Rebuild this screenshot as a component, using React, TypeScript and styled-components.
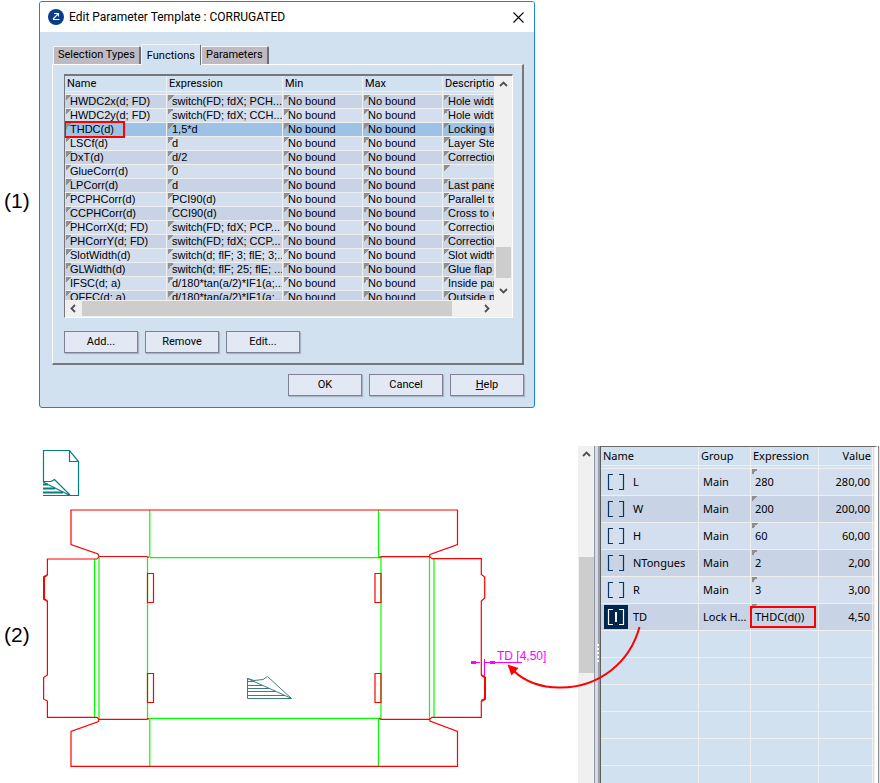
import React from "react";
import styled, { createGlobalStyle, css } from "styled-components";

const Global = createGlobalStyle`
  * { box-sizing: border-box; }
  body { margin: 0; background: #fff; color: #000; }
  button { font: inherit; color: inherit; }
`;

const uiFont = css`font-family: "Noto Sans", "Open Sans", sans-serif;`;
const dialogFont = css`font-family: Roboto, "Open Sans", sans-serif;`;
const gridFont = css`font-family: "Liberation Sans", Arial, sans-serif;`;

const Page = styled.main`
  display: flex;
  flex-direction: column;
  gap: 38px;
  height: 100vh;
  min-height: 700px;
  padding-top: 1px;
  overflow: hidden;
`;

const StepRow = styled.section`
  display: grid;
  grid-template-columns: 39px minmax(0, 496px);
`;

const StepLabel = styled.span`
  align-self: center;
  padding: 0 0 8px 4px;
  font: 21px/24px "Liberation Sans", Arial, sans-serif;
`;

/* ---------- dialog ---------- */

const Dialog = styled.div`
  ${dialogFont}
  font-size: 12px;
  line-height: 16px;
  border: 1px solid #1883d7;
  border-radius: 3px;
  background: #d2e1f0;
  overflow: hidden;
`;

const TitleBar = styled.header`
  display: flex;
  align-items: center;
  gap: 5px;
  height: 30px;
  padding: 0 8px;
  background: #fff;
`;

const Title = styled.h1`
  flex: 1;
  margin: 0;
  font-size: 12px;
  font-weight: 400;
  line-height: 16px;
`;

const CloseButton = styled.button`
  display: flex;
  padding: 2px;
  border: 0;
  background: none;
`;

const DialogBody = styled.div`
  padding: 12px 10px 11px 12px;
`;

const Tabs = styled.div`
  display: flex;
  align-items: flex-end;
  height: 20px;
  padding-left: 1px;
`;

const Tab = styled.button<{ $active?: boolean }>`
  height: ${(p) => (p.$active ? 21 : 18)}px;
  margin-bottom: ${(p) => (p.$active ? -1 : 0)}px;
  padding: ${(p) => (p.$active ? "2px 5px 0" : "0 4px 2px")};
  border: 1px solid #f4f6fa;
  border-right: ${(p) => (p.$active ? 1 : 2)}px solid #6f6d74;
  border-bottom: 0;
  border-radius: 2px 2px 0 0;
  background: ${(p) => (p.$active ? "#d2e1f0" : "#bfb9c1")};
  font-size: 11px;
  line-height: 16px;
  white-space: nowrap;
`;

const TabPanel = styled.div`
  padding: 9px 9px 10px 11px;
  border: 1px solid #fff;
  border-right: 2px solid #75777b;
  border-bottom: 2px solid #75777b;
`;

const ListBox = styled.div`
  display: grid;
  grid-template-columns: minmax(0, 1fr) 17px;
  grid-template-rows: 224px 17px;
  border: 1px solid #fff;
  border-top: 2px solid #75777b;
  border-left: 1px solid #75777b;
  background: #f0f0f0;
`;

const TableClip = styled.div`
  overflow: hidden;
`;

const FunctionTable = styled.table`
  ${gridFont}
  width: 100%;
  table-layout: fixed;
  border-collapse: separate;
  border-spacing: 0;
  font-size: 11px;
  line-height: 13px;
  th {
    ${dialogFont}
    height: 19px;
    padding: 0 2px 3px;
    border-right: 1px solid #f0f0f0;
    border-bottom: 1px solid #f0f0f0;
    background: linear-gradient(#d2e1f0 15px, #f0f0f0 15px, #f0f0f0 16px, #d2e1f0 16px);
    font-size: 11px;
    font-weight: 400;
    text-align: left;
    white-space: nowrap;
    overflow: hidden;
  }
`;

const Col = styled.col<{ $w?: number }>`
  width: ${(p) => (p.$w ? `${p.$w}px` : "auto")};
`;

const corner = css`
  background-image: linear-gradient(135deg, #8f8f8f 50%, transparent 50%);
  background-repeat: no-repeat;
  background-position: 1px 0;
  background-size: 6px 6px;
`;

const FunctionRow = styled.tr<{ $selected?: boolean }>`
  background: #d3dfef;
  &:nth-child(odd) { background: #c8d3e5; }
  ${(p) => p.$selected && css`&&:nth-child(odd) { background: #9ec2e6; }`}
`;

const FunctionCell = styled.td<{ $clip?: boolean }>`
  ${corner}
  height: 14px;
  padding: 0 0 0 5px;
  border-right: 1px solid #f0f0f0;
  border-bottom: 1px solid #f0f0f0;
  white-space: nowrap;
  overflow: ${(p) => (p.$clip ? "hidden" : "visible")};
`;

const Highlighted = styled.span`
  display: block;
  width: 57px;
  height: 13px;
  margin-left: -4px;
  padding-left: 4px;
  outline: 2px solid #f00;
`;

const VScroll = styled.div`
  display: flex;
  flex-direction: column;
  align-items: center;
  justify-content: space-between;
  padding: 4px 1px 5px 0;
  background: #f0f0f0;
`;

const VThumb = styled.div`
  width: 15px;
  height: 31px;
  margin: auto 0 8px;
  background: #cdcdcd;
`;

const HScroll = styled.div`
  display: flex;
  align-items: center;
  justify-content: space-between;
  grid-column: 1 / -1;
  padding: 1px 21px 1px 4px;
`;

const HThumb = styled.div`
  flex: 1;
  height: 15px;
  margin: 0 30px 0 4px;
  background: #cdcdcd;
`;

const ButtonRow = styled.div<{ $end?: boolean }>`
  display: flex;
  justify-content: ${(p) => (p.$end ? "flex-end" : "flex-start")};
  gap: 7px;
  margin-top: ${(p) => (p.$end ? 9 : 13)}px;
`;

const PushButton = styled.button`
  width: 74px;
  height: 22px;
  padding: 0;
  border: 1px solid #7f8096;
  background: #e2e8f4;
  box-shadow: 1px 1px 1px #a9b4c6;
  font-size: 11px;
  line-height: 18px;
`;

type ChevronProps = { dir: "up" | "down" | "left" | "right" };
const chevrons = {
  up: "M1 6 L4.5 2.5 L8 6",
  down: "M1 3 L4.5 6.5 L8 3",
  left: "M6 1 L2.5 4.5 L6 8",
  right: "M3 1 L6.5 4.5 L3 8",
};
const Chevron = ({ dir }: ChevronProps) => (
  <svg width="9" height="9" viewBox="0 0 9 9" fill="none" stroke="#505050" strokeWidth="1.8">
    <path d={chevrons[dir]} />
  </svg>
);

const functions: [string, string, string][] = [
  ["HWDC2x(d; FD)", "switch(FD; fdX; PCH...", "Hole width"],
  ["HWDC2y(d; FD)", "switch(FD; fdX; CCH...", "Hole width"],
  ["THDC(d)", "1,5*d", "Locking to"],
  ["LSCf(d)", "d", "Layer Step"],
  ["DxT(d)", "d/2", "Correction"],
  ["GlueCorr(d)", "0", ""],
  ["LPCorr(d)", "d", "Last pane"],
  ["PCPHCorr(d)", "PCI90(d)", "Parallel to"],
  ["CCPHCorr(d)", "CCI90(d)", "Cross to c"],
  ["PHCorrX(d; FD)", "switch(FD; fdX; PCP...", "Correction"],
  ["PHCorrY(d; FD)", "switch(FD; fdX; CCP...", "Correction"],
  ["SlotWidth(d)", "switch(d; flF; 3; flE; 3;...", "Slot width"],
  ["GLWidth(d)", "switch(d; flF; 25; flE; ...", "Glue flap w"],
  ["IFSC(d; a)", "d/180*tan(a/2)*IF1(a;...", "Inside pan"],
  ["OFFC(d; a)", "d/180*tan(a/2)*IF1(a;...", "Outside pa"],
];

const ParameterDialog = () => (
  <Dialog role="dialog" aria-label="Edit Parameter Template">
    <TitleBar>
      <svg width="16" height="16" viewBox="0 0 16 16">
        <circle cx="8" cy="8" r="8" fill="#0b3c8c" />
        <path d="M6 4.500H10.500V7.500M10.500 4.500L5 10M5 10.500H11.500" fill="none" stroke="#fff" strokeWidth="1.100" />
      </svg>
      <Title>Edit Parameter Template : CORRUGATED</Title>
      <CloseButton aria-label="Close">
        <svg width="11" height="11" viewBox="0 0 11 11" stroke="#000" strokeWidth="1.1">
          <path d="M0.5 0.5l10 10M10.5 0.5l-10 10" />
        </svg>
      </CloseButton>
    </TitleBar>
    <DialogBody>
      <Tabs role="tablist">
        <Tab role="tab">Selection Types</Tab>
        <Tab role="tab" $active aria-selected>Functions</Tab>
        <Tab role="tab">Parameters</Tab>
      </Tabs>
      <TabPanel role="tabpanel">
        <ListBox>
          <TableClip>
            <FunctionTable>
              <colgroup>
                <Col $w={102} /><Col $w={116} /><Col $w={80} /><Col $w={80} /><Col />
              </colgroup>
              <thead>
                <tr><th>Name</th><th>Expression</th><th>Min</th><th>Max</th><th>Description</th></tr>
              </thead>
              <tbody>
                {functions.map(([name, expression, description]) => {
                  const selected = name === "THDC(d)";
                  return (
                    <FunctionRow key={name} $selected={selected}>
                      <FunctionCell>{selected ? <Highlighted>{name}</Highlighted> : name}</FunctionCell>
                      <FunctionCell $clip>{expression}</FunctionCell>
                      <FunctionCell>No bound</FunctionCell>
                      <FunctionCell>No bound</FunctionCell>
                      <FunctionCell $clip>{description}</FunctionCell>
                    </FunctionRow>
                  );
                })}
              </tbody>
            </FunctionTable>
          </TableClip>
          <VScroll><Chevron dir="up" /><VThumb /><Chevron dir="down" /></VScroll>
          <HScroll><Chevron dir="left" /><HThumb /><Chevron dir="right" /></HScroll>
        </ListBox>
        <ButtonRow>
          <PushButton>Add...</PushButton>
          <PushButton>Remove</PushButton>
          <PushButton>Edit...</PushButton>
        </ButtonRow>
      </TabPanel>
      <ButtonRow $end>
        <PushButton>OK</PushButton>
        <PushButton>Cancel</PushButton>
        <PushButton><u>H</u>elp</PushButton>
      </ButtonRow>
    </DialogBody>
  </Dialog>
);

/* ---------- drawing ---------- */

const Workspace = styled.section`
  position: relative;
  display: grid;
  grid-template-columns: 39px 539px 16px 7px minmax(0, 1fr) 2px;
  flex: 1;
  min-height: 0;
  overflow: hidden;
`;

const WorkspaceLabel = styled(StepLabel)`
  align-self: start;
  margin-top: 177px;
`;

const CallArrow = styled.svg`
  position: absolute;
  left: 500px;
  top: 170px;
  pointer-events: none;
`;

const BoxDrawing = () => (
  <svg width="539" height="337" viewBox="39 446 539 337" fill="none">
    <g stroke="#008080" strokeWidth="1.2">
      <path d="M43.500 482V450.500H69.500L78.500 461.500V495.500H43M69.500 450.500V461.500H78.500" />
      <path d="M43 481.500H51L54.500 479.500L70 495M43 482L69 495" />
      <path d="M43 484.500H48M43 488.500H55M43 492.500H63" strokeWidth="2" />
    </g>
    <g stroke="#00ff00" strokeWidth="1.2">
      <path d="M149.800 510V557.500M149.800 557.700H380.500M378.500 510V557.500M147.500 557V719M94.600 559V717M99 557V719" />
      <path d="M381 557V719M429.500 557V719M434 559V717M149.800 766V718.400H381M378.500 718.400V766" />
    </g>
    <g stroke="#ff0000" strokeWidth="1.200">
      <path d="M149 557.500L147 556.500H99L98 554L71 544.500V510H457.500V544.500L430 554.500L429.500 556.600H381L379 557.500" />
      <path d="M99 556.500L97 559H47.400V575M47.400 601V675L43.600 677.500V699L47.400 701V717.400H97L99 719.400H147L149 718.400" />
      <path d="M99 719L98.500 721.500L71 731.500V766.400H457.500V731.500L430 721L429.500 719.400" />
      <path d="M429.500 556.600L432 558.700H481.300V574.500L484.700 577V598L481.300 601V675M481.300 701V717.400H432L429.500 719.400H381L379 718.400" />
      <path d="M147.500 573.500H153.500V602.500H147.500ZM147.500 673.500H153.500V702.500H147.500ZM375 573.500H381V602.500H375ZM375 673.500H381V702.500H375Z" />
      <path d="M47.400 575L44 577V599L47.400 601M481.300 675L485 677.500V699L481.300 701" strokeWidth="2" />
    </g>
    <path
      d="M247.500 678V698.500H291.500L247.500 678.500L254 680.500L263 679.500L267.500 676.500L291.500 698.500M248 681.500H254M248 685.500H262M248 688.500H269M248 691.500H276M248 695.500H285"
      stroke="#3f7c7c"
    />
    <path d="M484.500 659V676M471 662.500H480M485 662.500H522" stroke="#ff00ff" />
    <path d="M471 661h5v3h-5zM490 661h5v3h-5z" fill="#ff00ff" />
    <text x="497" y="660" fill="#ff00ff" fontFamily="Liberation Sans, Arial, sans-serif" fontSize="12">TD [4,50]</text>
  </svg>
);

const PaneScroll = styled.div`
  display: flex;
  flex-direction: column;
  align-items: center;
  padding-top: 4px;
  background: #f0f0f0;
`;

const PaneThumb = styled.div`
  width: 15px;
  height: 116px;
  margin-top: 98px;
  background: #cdcdcd;
`;

const Splitter = styled.div`
  display: flex;
  flex-direction: column;
  gap: 2px;
  padding: 198px 0 0 2px;
  border-left: 1px solid #8f97a6;
  background: linear-gradient(90deg, #d5dce8 3px, #9a9faa 3px, #9a9faa 5px, #5e5e5e 5px);
`;

const Grip = styled.i`
  width: 2px;
  height: 2px;
  background: #fff;
`;

/* ---------- parameter list ---------- */

const ParamPane = styled.div`
  border-top: 1px solid #696969;
  border-right: 3px solid #fff;
  background: #d2e1f0;
  overflow: hidden;
`;

const ParamTable = styled.table`
  ${uiFont}
  width: 100%;
  table-layout: fixed;
  border-collapse: separate;
  border-spacing: 0;
  font-size: 12px;
  line-height: 16px;
  th {
    height: 22px;
    padding: 0 2px 4px;
    border-right: 1px solid #f0f0f0;
    border-bottom: 1px solid #f0f0f0;
    background: linear-gradient(#d2e1f0 18px, #f0f0f0 18px, #f0f0f0 19px, #d2e1f0 19px);
    font-size: 11px;
    font-weight: 400;
    text-align: left;
    white-space: nowrap;
  }
  th:nth-child(4) { padding-right: 1px; text-align: right; }
`;

const ParamRow = styled.tr<{ $empty?: boolean }>`
  background: #d3dfef;
  &:nth-child(even) { background: #c8d3e5; }
  ${(p) => p.$empty && css`&&, &&:nth-child(even) { background: #d2e1f0; }`}
`;

const ParamCell = styled.td<{ $marked?: boolean; $number?: boolean }>`
  ${(p) => p.$marked && corner}
  height: 27px;
  padding: 0 2px 0 4px;
  border-right: 1px solid #f0f0f0;
  border-bottom: 1px solid #f0f0f0;
  font-size: 11px;
  text-align: ${(p) => (p.$number ? "right" : "left")};
  white-space: nowrap;
`;

const ParamName = styled.div`
  display: flex;
  align-items: center;
  gap: 5px;
  margin-left: -1px;
`;

const CallBox = styled.span`
  display: block;
  width: 66px;
  margin: 0 -3px 0 -5px;
  padding: 1px 3px;
  border: 2px solid #f00;
`;

const BracketIcon = ({ active }: { active?: boolean }) => (
  <svg width="24" height="24" viewBox="0 0 24 24" fill="none" stroke={active ? "#fff" : "#0f355e"} strokeWidth="1.200">
    {active && <path d="M0 0h24v24H0z" fill="#00264d" stroke="none" />}
    <path d="M9 4.500H4.500V19.500H9M15 4.500H19.500V19.500H15" />
    {active && <path d="M12 7V17" strokeWidth="2" />}
  </svg>
);

const parameters: [string, string, string, string][] = [
  ["L", "Main", "280", "280,00"],
  ["W", "Main", "200", "200,00"],
  ["H", "Main", "60", "60,00"],
  ["NTongues", "Main", "2", "2,00"],
  ["R", "Main", "3", "3,00"],
  ["TD", "Lock H...", "THDC(d())", "4,50"],
];
const emptyRows = [1, 2, 3, 4, 5, 6];

const ParameterList = () => (
  <ParamPane>
    <ParamTable>
      <colgroup><Col /><Col $w={52} /><Col $w={68} /><Col $w={54} /><Col $w={2} /></colgroup>
      <thead>
        <tr><th>Name</th><th>Group</th><th>Expression</th><th>Value</th><th /></tr>
      </thead>
      <tbody>
        {parameters.map(([name, group, expression, value]) => {
          const active = name === "TD";
          return (
            <ParamRow key={name}>
              <ParamCell><ParamName><BracketIcon active={active} />{name}</ParamName></ParamCell>
              <ParamCell>{group}</ParamCell>
              <ParamCell $marked>{active ? <CallBox>{expression}</CallBox> : expression}</ParamCell>
              <ParamCell $number>{value}</ParamCell>
              <ParamCell />
            </ParamRow>
          );
        })}
        {emptyRows.map((n) => (
          <ParamRow key={n} $empty><ParamCell /><ParamCell /><ParamCell /><ParamCell /><ParamCell /></ParamRow>
        ))}
      </tbody>
    </ParamTable>
  </ParamPane>
);

const EdgeStrip = styled.div`
  border-left: 1px solid #8c8c8c;
  background: #e4e4e4;
`;

export default function App() {
  return (
    <Page>
      <Global />
      <StepRow>
        <StepLabel>(1)</StepLabel>
        <ParameterDialog />
      </StepRow>
      <Workspace>
        <WorkspaceLabel>(2)</WorkspaceLabel>
        <BoxDrawing />
        <PaneScroll><Chevron dir="up" /><PaneThumb /></PaneScroll>
        <Splitter><Grip /><Grip /><Grip /><Grip /><Grip /></Splitter>
        <ParameterList />
        <EdgeStrip />
        <CallArrow width="150" height="80" viewBox="500 616 150 80" fill="none">
          <path d="M639.500 627C630 662 600 687 561 687.500C541 688 524 681 514 671" stroke="#f00" strokeWidth="2" />
          <path d="M507.500 664.500L518.500 668L511.500 675.500Z" fill="#f00" />
        </CallArrow>
      </Workspace>
    </Page>
  );
}
